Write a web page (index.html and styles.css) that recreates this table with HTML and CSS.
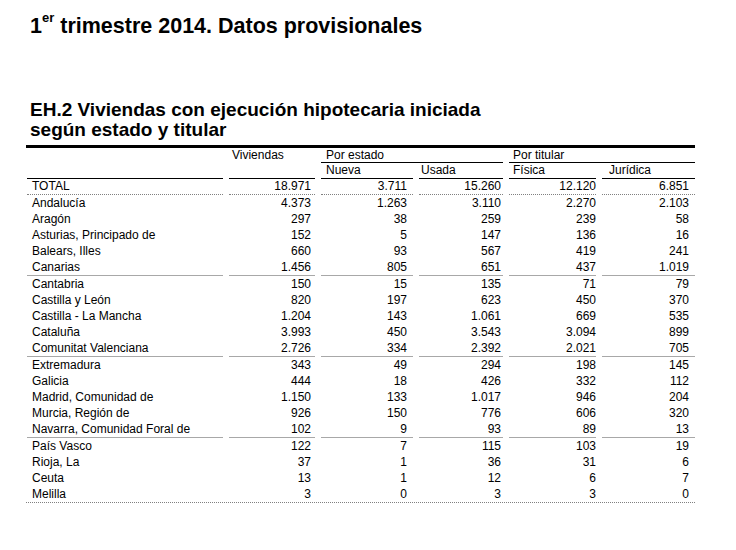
FILE: index.html
```html
<!DOCTYPE html>
<html lang="es">
<head>
<meta charset="utf-8">
<title>EH.2 Viviendas con ejecución hipotecaria iniciada</title>
<link rel="stylesheet" href="styles.css">
</head>
<body>
<div class="page">
  <h1 class="title">1<span class="sup">er</span> trimestre 2014. Datos provisionales</h1>
  <h2 class="subtitle">EH.2 Viviendas con ejecución hipotecaria iniciada<br>según estado y titular</h2>
  <div class="table-wrap">
    <table class="data">
      <colgroup>
        <col class="w1"><col class="w2"><col class="w3"><col class="w4"><col class="w5"><col class="w6">
      </colgroup>
      <thead>
        <tr class="h1">
          <th class="c1 rs" rowspan="2"></th>
          <th class="c2 rs" rowspan="2">Viviendas</th>
          <th class="c3 ln" colspan="2">Por estado</th>
          <th class="c5 ln" colspan="2">Por titular</th>
        </tr>
        <tr class="h2">
          <th class="c3 ln">Nueva</th>
          <th class="c4 ln">Usada</th>
          <th class="c5 ln">Física</th>
          <th class="c6 ln">Jurídica</th>
        </tr>
      </thead>
      <tbody>
        <tr class="total"><td class="c1">TOTAL</td><td class="c2">18.971</td><td class="c3">3.711</td><td class="c4">15.260</td><td class="c5">12.120</td><td class="c6">6.851</td></tr>
        <tr><td class="c1">Andalucía</td><td class="c2">4.373</td><td class="c3">1.263</td><td class="c4">3.110</td><td class="c5">2.270</td><td class="c6">2.103</td></tr>
        <tr><td class="c1">Aragón</td><td class="c2">297</td><td class="c3">38</td><td class="c4">259</td><td class="c5">239</td><td class="c6">58</td></tr>
        <tr><td class="c1">Asturias, Principado de</td><td class="c2">152</td><td class="c3">5</td><td class="c4">147</td><td class="c5">136</td><td class="c6">16</td></tr>
        <tr><td class="c1">Balears, Illes</td><td class="c2">660</td><td class="c3">93</td><td class="c4">567</td><td class="c5">419</td><td class="c6">241</td></tr>
        <tr class="grp"><td class="c1">Canarias</td><td class="c2">1.456</td><td class="c3">805</td><td class="c4">651</td><td class="c5">437</td><td class="c6">1.019</td></tr>
        <tr><td class="c1">Cantabria</td><td class="c2">150</td><td class="c3">15</td><td class="c4">135</td><td class="c5">71</td><td class="c6">79</td></tr>
        <tr><td class="c1">Castilla y León</td><td class="c2">820</td><td class="c3">197</td><td class="c4">623</td><td class="c5">450</td><td class="c6">370</td></tr>
        <tr><td class="c1">Castilla - La Mancha</td><td class="c2">1.204</td><td class="c3">143</td><td class="c4">1.061</td><td class="c5">669</td><td class="c6">535</td></tr>
        <tr><td class="c1">Cataluña</td><td class="c2">3.993</td><td class="c3">450</td><td class="c4">3.543</td><td class="c5">3.094</td><td class="c6">899</td></tr>
        <tr class="grp"><td class="c1">Comunitat Valenciana</td><td class="c2">2.726</td><td class="c3">334</td><td class="c4">2.392</td><td class="c5">2.021</td><td class="c6">705</td></tr>
        <tr><td class="c1">Extremadura</td><td class="c2">343</td><td class="c3">49</td><td class="c4">294</td><td class="c5">198</td><td class="c6">145</td></tr>
        <tr><td class="c1">Galicia</td><td class="c2">444</td><td class="c3">18</td><td class="c4">426</td><td class="c5">332</td><td class="c6">112</td></tr>
        <tr><td class="c1">Madrid, Comunidad de</td><td class="c2">1.150</td><td class="c3">133</td><td class="c4">1.017</td><td class="c5">946</td><td class="c6">204</td></tr>
        <tr><td class="c1">Murcia, Región de</td><td class="c2">926</td><td class="c3">150</td><td class="c4">776</td><td class="c5">606</td><td class="c6">320</td></tr>
        <tr class="grp"><td class="c1">Navarra, Comunidad Foral de</td><td class="c2">102</td><td class="c3">9</td><td class="c4">93</td><td class="c5">89</td><td class="c6">13</td></tr>
        <tr><td class="c1">País Vasco</td><td class="c2">122</td><td class="c3">7</td><td class="c4">115</td><td class="c5">103</td><td class="c6">19</td></tr>
        <tr><td class="c1">Rioja, La</td><td class="c2">37</td><td class="c3">1</td><td class="c4">36</td><td class="c5">31</td><td class="c6">6</td></tr>
        <tr><td class="c1">Ceuta</td><td class="c2">13</td><td class="c3">1</td><td class="c4">12</td><td class="c5">6</td><td class="c6">7</td></tr>
        <tr><td class="c1">Melilla</td><td class="c2">3</td><td class="c3">0</td><td class="c4">3</td><td class="c5">3</td><td class="c6">0</td></tr>
      </tbody>
    </table>
  </div>
</div>
</body>
</html>
```

FILE: styles.css
```css
html, body {
  margin: 0;
  padding: 0;
  background: #ffffff;
}

.page {
  font-family: "Liberation Sans", Arial, sans-serif;
  color: #000000;
  padding: 14px 0 0 30px;
}

.title {
  margin: 0;
  font-size: 21.5px;
  line-height: 24px;
  font-weight: bold;
}

.sup {
  font-size: 13px;
  vertical-align: 11px;
  line-height: 0;
}

.subtitle {
  margin: 62px 0 0 0;
  font-size: 19px;
  line-height: 20px;
  font-weight: bold;
}

.table-wrap {
  margin: 5px 0 0 -4px;
  width: 669px;
  border-top: 3px solid #000000;
  border-bottom: 1px dotted #808080;
}

.data {
  border-collapse: separate;
  border-spacing: 6px 0;
  margin: 0 -6px 0 -5px;
  width: 680px;
  table-layout: fixed;
  font-size: 12px;
}

.w1 { width: 196px; }
.w2 { width: 86px; }
.w3 { width: 92px; }
.w4 { width: 84px; }
.w5 { width: 87px; }
.w6 { width: 93px; }

.data th {
  font-weight: normal;
  text-align: left;
  vertical-align: top;
  padding: 0;
  white-space: nowrap;
}

.data .h1 th {
  line-height: 14px;
}

.data .h2 th {
  line-height: 15px;
}

.data th.rs,
.data th.ln {
  border-bottom: 1px solid #000000;
}

.data th.c2 { padding-left: 3px; }
.data th.c3 { padding-left: 5px; }
.data th.c4 { padding-left: 2px; }
.data th.c5 { padding-left: 4px; }
.data th.c6 { padding-left: 7px; }

.data td {
  padding: 0;
  line-height: 16px;
  text-align: right;
  white-space: nowrap;
}

.data td.c1 {
  text-align: left;
  padding-left: 5px;
}

.data td.c2 { padding-right: 4px; }
.data td.c3 { padding-right: 6px; }
.data td.c4 { padding-right: 2px; }
.data td.c5 { padding-right: 0; }
.data td.c6 { padding-right: 6px; }

.data .total td {
  line-height: 15px;
  border-bottom: 1px dotted #808080;
}

.data .grp td {
  border-bottom: 1px solid #a8a8a8;
}
```
